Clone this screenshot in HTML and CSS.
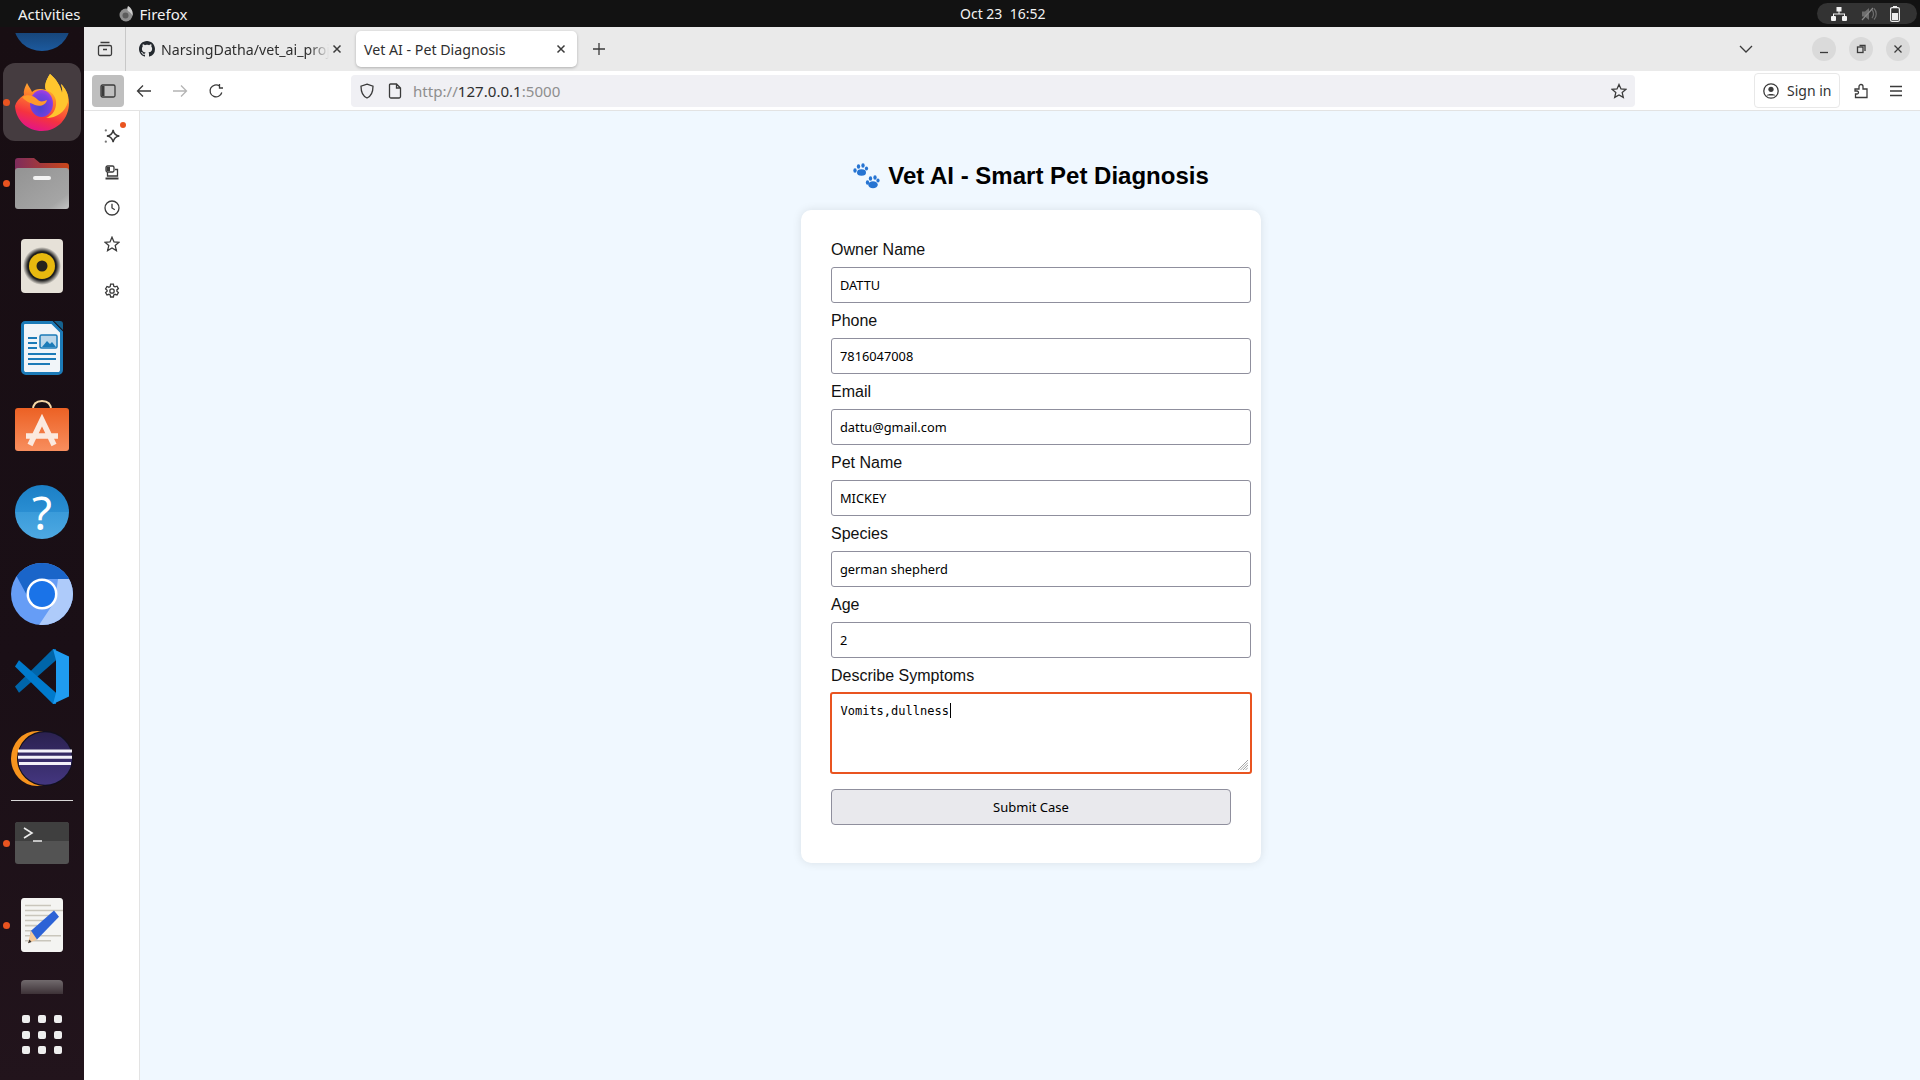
FILE: index.html
```html
<!DOCTYPE html>
<html lang="en">
<head>
    <meta charset="UTF-8">
    <title>Vet AI - Pet Diagnosis</title>
    <link rel="stylesheet" href="styles.css">
</head>
<body>
    <!-- gnome top bar -->
    <header class="topbar">
        <div class="topbar-left">
            <span class="activities">Activities</span>
            <span class="app-menu">
                <svg class="app-menu-icon" width="16" height="18" viewBox="0 0 16 18"><circle cx="8" cy="10" r="6.5" fill="#8f8f8f"/><path d="M10 1c-1 2-1 3.5 0 5 2 1 4 3 4.5 5 1-4-1-8-4.5-10z" fill="#cfcfcf"/><circle cx="7.5" cy="10.5" r="3" fill="#5d5d5d"/></svg>
                Firefox
            </span>
        </div>
        <div class="clock">Oct 23&nbsp;&nbsp;16:52</div>
        <div class="tray">
            <svg width="16" height="14" viewBox="0 0 16 14" fill="#f2f2f2"><rect x="5.5" y="0" width="5" height="4.5"/><rect x="0" y="9" width="5" height="5" rx="1"/><rect x="11" y="9" width="5" height="5" rx="1"/><path d="M7.5 4h1v2.5h5.5v3h-1V7.5H3v2H2v-3h5.5z"/></svg>
            <svg width="16" height="14" viewBox="0 0 16 14"><path d="M1 4.5h3L8 1v12L4 9.5H1z" fill="#6e6e6e"/><path d="M11 3c2 2 2 6 0 8M13 1.5c3 3 3 8 0 11" fill="none" stroke="#6e6e6e" stroke-width="1.2"/><path d="M1 13L12 1" stroke="#8a8a8a" stroke-width="1.2"/></svg>
            <svg width="10" height="16" viewBox="0 0 10 16"><rect x="3" y="0" width="4" height="2" fill="#eee"/><rect x="0.6" y="1.6" width="8.8" height="13.8" rx="1.5" fill="none" stroke="#eee" stroke-width="1.2"/><rect x="2" y="7" width="6" height="7" fill="#eee"/></svg>
        </div>
    </header>

    <div class="desktop">
        <!-- ubuntu dock -->
        <nav class="dock">
            <div class="dock-item planet">
                <svg width="58" height="18" viewBox="0 0 58 18"><defs><linearGradient id="pl" x1="0" y1="0" x2="0" y2="1"><stop offset="0" stop-color="#0e1f38"/><stop offset="1" stop-color="#1c5a9e"/></linearGradient></defs><ellipse cx="29" cy="-8" rx="28" ry="26" fill="url(#pl)"/></svg>
            </div>
            <div class="dock-item firefox-tile">
                <span class="run-dot"></span>
                <svg width="54" height="57" viewBox="0 0 54 57">
                    <defs>
                        <linearGradient id="ff" x1="0.7" y1="0" x2="0.4" y2="1"><stop offset="0" stop-color="#ffe847"/><stop offset="0.4" stop-color="#ff8a2a"/><stop offset="0.75" stop-color="#f5333f"/><stop offset="1" stop-color="#e31587"/></linearGradient>
                        <radialGradient id="ffglobe" cx="0.45" cy="0.65" r="0.7"><stop offset="0" stop-color="#4a45d0"/><stop offset="0.7" stop-color="#7a3fe0"/><stop offset="1" stop-color="#b040e0"/></radialGradient>
                    </defs>
                    <path d="M35 0C31 6 29 12 31 16 25 14 20 15 17 18 16 15 14 13 12 9 10 13 8 17 9 21 4 24 1 28 0 32 1 47 13 57 27 57 43 57 54 44 54 29 54 20 50 14 46 10 47 14 48 17 47 19 45 11 41 5 35 0Z" fill="url(#ff)"/>
                    <path d="M35 0C31 6 29 12 31 16 38 18 42 24 41 31 40 38 36 42 31 44 42 44 50 38 53 28 54 20 50 14 46 10 47 14 48 17 47 19 45 11 41 5 35 0Z" fill="#ffc62e"/>
                    <ellipse cx="26.5" cy="29.5" rx="11.5" ry="13.5" fill="url(#ffglobe)"/>
                    <path d="M7 23C12 20 18 21 22 25 24 28 28 28 32 26 31 31 25 33 20 31 16 29 11 28 7 23Z" fill="#ff9a2a"/>
                </svg>
            </div>
            <div class="dock-item files">
                <span class="run-dot"></span>
                <svg width="54" height="51" viewBox="0 0 54 51">
                    <defs>
                        <linearGradient id="fld" x1="0" y1="0" x2="1" y2="0"><stop offset="0" stop-color="#7e2c5c"/><stop offset="1" stop-color="#c9471a"/></linearGradient>
                        <linearGradient id="fldf" x1="0" y1="0" x2="1" y2="1"><stop offset="0" stop-color="#939393"/><stop offset="0.8" stop-color="#a5a5a5"/><stop offset="1" stop-color="#c4c4c4"/></linearGradient>
                    </defs>
                    <path d="M0 14V3a3 3 0 0 1 3-3h16l6 5h26a3 3 0 0 1 3 3v6z" fill="url(#fld)"/>
                    <rect x="0" y="10" width="54" height="41" rx="3" fill="url(#fldf)"/>
                    <rect x="18" y="18" width="18" height="4" rx="2" fill="#f3f3f3"/>
                </svg>
            </div>
            <div class="dock-item rhythmbox">
                <svg width="42" height="54" viewBox="0 0 42 54">
                    <defs><radialGradient id="spk"><stop offset="0.75" stop-color="#1e1e1e"/><stop offset="1" stop-color="#1e1e1e" stop-opacity="0"/></radialGradient></defs>
                    <rect width="42" height="54" rx="4" fill="#e6e1d8"/>
                    <circle cx="21" cy="27" r="19" fill="url(#spk)"/>
                    <circle cx="21" cy="27" r="13" fill="#e8b90f"/>
                    <circle cx="21" cy="27" r="5.5" fill="#26231c"/>
                </svg>
            </div>
            <div class="dock-item writer">
                <svg width="42" height="54" viewBox="0 0 42 54">
                    <path d="M4 1.5h27L40.5 11v38a3.5 3.5 0 0 1-3.5 3.5H5A3.5 3.5 0 0 1 1.5 49V4A2.5 2.5 0 0 1 4 1.5z" fill="#f1f5f9" stroke="#1c7bb8" stroke-width="3"/>
                    <path d="M33 0h6a3 3 0 0 1 3 3v6z" fill="#15628f"/>
                    <path d="M7 17h9M7 22h9M7 27h9M7 33h28M7 38h28M7 43h22" stroke="#1c7bb8" stroke-width="2"/>
                    <rect x="19" y="14" width="17" height="13" rx="1.5" fill="#bcd7ea" stroke="#1c7bb8" stroke-width="1.5"/>
                    <path d="M21 26l5-6 3 3 2-2 4 5z" fill="#1c7bb8"/>
                </svg>
            </div>
            <div class="dock-item appstore">
                <svg width="54" height="51" viewBox="0 0 54 51">
                    <defs><linearGradient id="bag" x1="0" y1="0" x2="0" y2="1"><stop offset="0" stop-color="#ec6124"/><stop offset="1" stop-color="#f88e5e"/></linearGradient></defs>
                    <path d="M18 10C18 3 22 1 27 1s9 2 9 9" fill="none" stroke="#f5d7a6" stroke-width="2"/>
                    <rect y="8" width="54" height="43" rx="3" fill="url(#bag)"/>
                    <path d="M15 45L27 20l12 25M11 36h32" fill="none" stroke="#fbe9df" stroke-width="5.5"/>
                </svg>
            </div>
            <div class="dock-item help">
                <svg width="54" height="54" viewBox="0 0 54 54">
                    <defs><linearGradient id="hlp" x1="0" y1="0" x2="0" y2="1"><stop offset="0" stop-color="#1b7fc6"/><stop offset="0.5" stop-color="#2a8ed2"/><stop offset="0.5" stop-color="#3a9bda"/><stop offset="1" stop-color="#4ea9e2"/></linearGradient></defs>
                    <circle cx="27" cy="27" r="27" fill="url(#hlp)"/>
                    <text x="27" y="45" text-anchor="middle" class="help-mark">?</text>
                </svg>
            </div>
            <div class="dock-item chrome">
                <svg width="62" height="62" viewBox="0 0 62 62">
                    <defs><clipPath id="chr"><circle cx="31" cy="31" r="31"/></clipPath></defs>
                    <g clip-path="url(#chr)">
                        <rect width="62" height="62" fill="#669df6"/>
                        <polygon points="0,0 62,0 62,16 31,16 19,38 5,12" fill="#1a65c9"/>
                        <polygon points="47,16 62,16 62,62 28,62 44,38" fill="#aecbfa"/>
                    </g>
                    <circle cx="31" cy="31" r="15.5" fill="#fff"/>
                    <circle cx="31" cy="31" r="13" fill="#1a73e8"/>
                </svg>
            </div>
            <div class="dock-item vscode">
                <svg width="54" height="55" viewBox="0 0 54 44" preserveAspectRatio="none">
                    <polygon points="0,30 4,35 41,9 41,0 38,0" fill="#0065a9"/>
                    <polygon points="0,14 4,9 41,35 41,44 38,44" fill="#007acc"/>
                    <polygon points="38,0 54,6 54,38 38,44 41,35 41,9" fill="#1f9cf0"/>
                </svg>
            </div>
            <div class="dock-item eclipse">
                <svg width="62" height="55" viewBox="0 0 62 44" preserveAspectRatio="none">
                    <defs><linearGradient id="ecl" x1="0" y1="0" x2="0" y2="1"><stop offset="0" stop-color="#2b2150"/><stop offset="1" stop-color="#43367f"/></linearGradient></defs>
                    <ellipse cx="26" cy="22" rx="26" ry="22" fill="#f7941e"/>
                    <ellipse cx="34" cy="22" rx="28" ry="22" fill="#12101f"/>
                    <ellipse cx="34" cy="22" rx="27" ry="21" fill="url(#ecl)"/>
                    <path d="M7 16h54M7 21h54M8 26h52" stroke="#f3f1f8" stroke-width="2.5"/>
                </svg>
            </div>
            <div class="dock-sep"></div>
            <div class="dock-item terminal">
                <span class="run-dot"></span>
                <svg width="54" height="42" viewBox="0 0 54 42">
                    <rect width="54" height="42" rx="3" fill="#535353"/>
                    <path d="M0 19V3a3 3 0 0 1 3-3h48a3 3 0 0 1 3 3v16z" fill="#3f3f3f"/>
                    <path d="M9 6l8 5-8 5M18 19h9" fill="none" stroke="#ececec" stroke-width="1.6"/>
                </svg>
            </div>
            <div class="dock-item editor">
                <span class="run-dot"></span>
                <svg width="42" height="54" viewBox="0 0 42 43" preserveAspectRatio="none">
                    <rect width="42" height="43" rx="3" fill="#f4f4f2"/>
                    <path d="M4 6h26M4 10h38M4 14h26M4 18h26M4 22h12M4 26h12M4 30h36M4 34h26" stroke="#c9c6bc" stroke-width="1.2"/>
                    <path d="M33 10l5 5-22 18-7-1 1-6z" fill="#2c62d6"/>
                    <path d="M10 26l6 7-9 3z" fill="#f4c99a"/>
                    <path d="M7 36l1.5-3 2 2z" fill="#333"/>
                </svg>
            </div>
            <div class="dock-item trash">
                <svg width="42" height="14" viewBox="0 0 42 14">
                    <defs><linearGradient id="trs" x1="0" y1="0" x2="0" y2="1"><stop offset="0" stop-color="#716a6d"/><stop offset="1" stop-color="#3d3237"/></linearGradient></defs>
                    <path d="M0 14V4a4 4 0 0 1 4-4h34a4 4 0 0 1 4 4v10z" fill="url(#trs)"/>
                </svg>
            </div>
            <div class="app-grid">
                <i></i><i></i><i></i><i></i><i></i><i></i><i></i><i></i><i></i>
            </div>
        </nav>

        <div class="browser">
            <!-- tab strip -->
            <div class="tabstrip">
                <div class="tab-manager">
                    <svg class="ico" width="16" height="16" viewBox="0 0 16 16"><path d="M3.5 1.5h9M1.5 6A1.5 1.5 0 0 1 3 4.5h10A1.5 1.5 0 0 1 14.5 6v7a1.5 1.5 0 0 1-1.5 1.5H3A1.5 1.5 0 0 1 1.5 13zM6 8.5h4"/></svg>
                </div>
                <div class="tab">
                    <svg class="tab-favicon" width="16" height="16" viewBox="0 0 16 16"><path fill="#24292f" d="M8 0C3.58 0 0 3.58 0 8c0 3.54 2.29 6.53 5.47 7.59.4.07.55-.17.55-.38 0-.19-.01-.82-.01-1.49-2.01.37-2.53-.49-2.69-.94-.09-.23-.48-.94-.82-1.13-.28-.15-.68-.52-.01-.53.63-.01 1.08.58 1.23.82.72 1.21 1.87.87 2.33.66.07-.52.28-.87.51-1.07-1.78-.2-3.64-.89-3.64-3.95 0-.87.31-1.59.82-2.15-.08-.2-.36-1.02.08-2.12 0 0 .67-.21 2.2.82.64-.18 1.32-.27 2-.27.68 0 1.36.09 2 .27 1.53-1.04 2.2-.82 2.2-.82.44 1.1.16 1.92.08 2.12.51.56.82 1.27.82 2.15 0 3.07-1.87 3.75-3.65 3.95.29.25.54.73.54 1.48 0 1.07-.01 1.93-.01 2.2 0 .21.15.46.55.38A8.013 8.013 0 0016 8c0-4.42-3.58-8-8-8z"/></svg>
                    <span class="tab-title">NarsingDatha/vet_ai_project</span>
                    <svg class="ico tab-close" width="10" height="10" viewBox="0 0 10 10"><path d="M1.5 1.5l7 7M8.5 1.5l-7 7"/></svg>
                </div>
                <div class="tab active">
                    <span class="tab-title">Vet AI - Pet Diagnosis</span>
                    <svg class="ico tab-close" width="10" height="10" viewBox="0 0 10 10"><path d="M1.5 1.5l7 7M8.5 1.5l-7 7"/></svg>
                </div>
                <svg class="ico new-tab" width="14" height="14" viewBox="0 0 14 14"><path d="M7 1v12M1 7h12"/></svg>
                <div class="tabstrip-right">
                    <svg class="ico" width="14" height="8" viewBox="0 0 14 8"><path d="M1 1l6 6 6-6"/></svg>
                    <div class="win-buttons">
                        <span class="win-btn"><svg class="ico" width="10" height="10" viewBox="0 0 10 10"><path d="M1 8.5h8"/></svg></span>
                        <span class="win-btn"><svg class="ico" width="10" height="10" viewBox="0 0 10 10"><rect x="1.5" y="3" width="5.5" height="5.5"/><path d="M3.5 1.5H9V7"/></svg></span>
                        <span class="win-btn"><svg class="ico" width="10" height="10" viewBox="0 0 10 10"><path d="M1.5 1.5l7 7M8.5 1.5l-7 7"/></svg></span>
                    </div>
                </div>
            </div>

            <!-- toolbar -->
            <div class="toolbar">
                <span class="sidebar-toggle"><svg class="ico toggle-ico" width="16" height="14" viewBox="0 0 16 14"><rect x="1" y="1" width="14" height="12" rx="1.5"/><path d="M3 2v10" stroke-width="3"/></svg></span>
                <span class="nav-btn back"><svg class="ico" width="16" height="14" viewBox="0 0 16 14"><path d="M15 7H1.5M7 1.5L1.5 7 7 12.5"/></svg></span>
                <span class="nav-btn off"><svg class="ico" width="16" height="14" viewBox="0 0 16 14"><path d="M1 7h13.5M9 1.5L14.5 7 9 12.5"/></svg></span>
                <span class="nav-btn"><svg class="ico" width="16" height="16" viewBox="0 0 16 16"><path d="M13.8 9.5A6 6 0 1 1 11.5 3M11.5 1v4H15"/></svg></span>
                <div class="urlbar">
                    <svg class="ico shield" width="16" height="16" viewBox="0 0 16 16"><path d="M8 1.2l6 2c0 6-1.5 9.8-6 11.800-4.500-2-6-5.800-6-11.800z"/></svg>
                    <svg class="ico page" width="14" height="16" viewBox="0 0 14 16"><path d="M2.5 1h6l4 4v8.500a1.500 1.500 0 0 1-1.500 1.500H3a1.500 1.500 0 0 1-1.500-1.500V2a1 1 0 0 1 1-1zM8.500 1v4h4"/></svg>
                    <span class="url"><span class="dim">http://</span>127.0.0.1<span class="dim">:5000</span></span>
                    <svg class="ico url-star" width="16" height="16" viewBox="0 0 16 16"><polygon points="8,1.5 10,6 14.8,6.4 11.2,9.6 12.3,14.4 8,11.9 3.7,14.4 4.8,9.6 1.2,6.4 6,6"/></svg>
                </div>
                <div class="signin">
                    <svg class="ico" width="16" height="16" viewBox="0 0 16 16"><circle cx="8" cy="8" r="7.2"/><circle cx="8" cy="6.3" r="2.6" class="fill"/><path d="M3.5 12.5c1-2 8-2 9 0" class="fill"/></svg>
                    <span>Sign in</span>
                </div>
                <svg class="ico puzzle" width="16" height="16" viewBox="0 0 16 16"><path d="M2 6h4V3.5a2 2 0 0 1 4 0V6h4v8.5H2.5V11H4a1.5 1.5 0 0 0 0-3H2z"/></svg>
                <svg class="ico burger" width="14" height="12" viewBox="0 0 14 12"><path d="M1 1.5h12M1 6h12M1 10.5h12"/></svg>
            </div>

            <div class="browser-main">
                <!-- firefox sidebar -->
                <aside class="sidebar">
                    <span class="side-ico genai">
                        <svg class="ico" width="18" height="18" viewBox="0 0 16 16"><path d="M9 2.5c.5 3.5 2 5 5.5 5.5-3.5.5-5 2-5.500 5.500C8.500 10 7 8.500 3.500 8 7 7.500 8.500 6 9 2.500z"/><circle cx="2.5" cy="3" r="1" class="fill dim"/><circle cx="2.5" cy="13" r="1" class="fill dim"/></svg>
                        <span class="side-dot"></span>
                    </span>
                    <span class="side-ico sync"><svg class="ico" width="16" height="16" viewBox="0 0 16 16"><rect x="2" y="1" width="8" height="6" rx="1.5"/><rect x="2.5" y="2" width="3.5" height="4" class="fill"/><path d="M3.5 7v4h10V4.5H11"/><path d="M1.5 13.5h13" stroke-width="2"/></svg></span>
                    <span class="side-ico"><svg class="ico" width="16" height="16" viewBox="0 0 16 16"><circle cx="8" cy="8" r="7"/><path d="M8 3.8V8l2.8 1.8"/></svg></span>
                    <span class="side-ico"><svg class="ico" width="16" height="16" viewBox="0 0 16 16"><polygon points="8,1.2 10,5.9 15,6.3 11.2,9.6 12.4,14.6 8,12 3.6,14.6 4.8,9.6 1,6.3 6,5.9"/></svg></span>
                    <span class="side-ico gear"><svg class="ico" width="16" height="16" viewBox="0 0 16 16"><path d="M6.6 1.2h2.8l.4 2 1.3.7 1.9-.7 1.4 2.4-1.5 1.3v1.4l1.5 1.3-1.4 2.4-1.9-.7-1.3.7-.4 2H6.6l-.4-2-1.3-.7-1.9.7-1.4-2.4 1.5-1.3V7.2L1.6 5.9 3 3.5l1.9.7 1.3-.7z"/><circle cx="8" cy="8" r="2.2"/></svg></span>
                </aside>

                <!-- the page itself -->
                <main class="page-content">
                    <h1 class="page-title">
                        <svg class="paws" width="27" height="26" viewBox="0 0 27 26">
                            <g fill="#2674d2">
                                <ellipse cx="2" cy="7.5" rx="1.7" ry="2.2"/>
                                <ellipse cx="5.5" cy="3.5" rx="1.7" ry="2.3"/>
                                <ellipse cx="10" cy="2.5" rx="1.7" ry="2.3"/>
                                <ellipse cx="13.5" cy="5.5" rx="1.6" ry="2.1"/>
                                <ellipse cx="8.5" cy="9.5" rx="4.5" ry="3.3"/>
                                <ellipse cx="14.5" cy="19.5" rx="1.7" ry="2.2"/>
                                <ellipse cx="17.5" cy="15.5" rx="1.7" ry="2.3"/>
                                <ellipse cx="22" cy="14.5" rx="1.7" ry="2.3"/>
                                <ellipse cx="25" cy="17.5" rx="1.6" ry="2.1"/>
                                <ellipse cx="20" cy="21.7" rx="4.8" ry="3.5"/>
                            </g>
                        </svg>
                        Vet AI - Smart Pet Diagnosis
                    </h1>
                    <form class="case-form">
                        <label for="owner">Owner Name</label>
                        <input type="text" id="owner" value="DATTU">
                        <label for="phone">Phone</label>
                        <input type="text" id="phone" value="7816047008">
                        <label for="email">Email</label>
                        <input type="text" id="email" value="dattu@gmail.com">
                        <label for="pet">Pet Name</label>
                        <input type="text" id="pet" value="MICKEY">
                        <label for="species">Species</label>
                        <input type="text" id="species" value="german shepherd">
                        <label for="age">Age</label>
                        <input type="text" id="age" value="2">
                        <label for="symptoms">Describe Symptoms</label>
                        <div class="symptoms-wrap">
                            <textarea id="symptoms">Vomits,dullness</textarea>
                            <span class="caret"></span>
                            <svg class="grip" width="10" height="10" viewBox="0 0 10 10"><path d="M0 10L10 0M2.5 10L10 2.5M5 10l5-5M7.5 10L10 7.5" stroke="#8a8a8a" stroke-width="0.8"/></svg>
                        </div>
                        <button type="button">Submit Case</button>
                    </form>
                </main>
            </div>
        </div>
    </div>
</body>
</html>
```

FILE: styles.css
```css
* {
    box-sizing: border-box;
}
body {
    margin: 0;
    height: 1080px;
    overflow: hidden;
    display: flex;
    flex-direction: column;
    font-family: "Noto Sans", sans-serif;
    background: #1a0f14;
}

/* top bar */
.topbar {
    height: 27px;
    flex: none;
    background: #121212;
    color: #f2f2f2;
    font-size: 15px;
    display: flex;
    align-items: center;
    position: relative;
}
.topbar-left {
    display: flex;
    align-items: center;
    padding-left: 18px;
    gap: 37px;
}
.app-menu {
    display: flex;
    align-items: center;
    gap: 6px;
}
.clock {
    position: absolute;
    left: 960px;
    top: 4px;
    font-size: 14px;
}
.tray {
    margin-left: auto;
    margin-right: 3px;
    width: 100px;
    height: 21px;
    background: #333;
    border-radius: 11px;
    display: flex;
    align-items: center;
    justify-content: space-between;
    padding: 0 17px 0 14px;
}

/* dock */
.desktop {
    flex: 1;
    display: flex;
    min-height: 0;
}
.dock {
    width: 84px;
    flex: none;
    display: flex;
    flex-direction: column;
    align-items: center;
    background: linear-gradient(#180e13, #1a0f16 60%, #22141c);
}
.dock-item {
    width: 84px;
    display: flex;
    justify-content: center;
    position: relative;
}
.dock-item svg {
    display: block;
    overflow: visible;
}
.planet { margin-top: 6px; }
.planet svg { overflow: hidden; }
.firefox-tile {
    margin-top: 12px;
    width: 78px;
    height: 78px;
    align-items: center;
    background: #453c40;
    border-radius: 12px;
}
.firefox-tile .run-dot { left: 0; }
.files { margin-top: 17px; }
.rhythmbox { margin-top: 30px; }
.writer { margin-top: 28px; }
.appstore { margin-top: 25px; }
.help { margin-top: 34px; }
.chrome { margin-top: 24px; }
.vscode { margin-top: 24px; }
.eclipse { margin-top: 27px; }
.dock-sep {
    width: 62px;
    height: 1px;
    background: #d8d6d7;
    margin-top: 14px;
}
.terminal { margin-top: 21px; }
.editor { margin-top: 34px; }
.trash { margin-top: 28px; }
.run-dot {
    position: absolute;
    left: 3px;
    top: 50%;
    width: 7px;
    height: 7px;
    margin-top: -3.5px;
    border-radius: 50%;
    background: #e95420;
}
.help-mark {
    font-family: "Noto Sans", sans-serif;
    font-size: 46px;
    fill: #fff;
}
.app-grid {
    margin-top: 21px;
    display: grid;
    grid-template-columns: repeat(3, 8px);
    grid-auto-rows: 8px;
    gap: 7.5px 8px;
}
.app-grid i {
    background: #eee;
    border-radius: 2px;
}

/* browser chrome */
.browser {
    flex: 1;
    min-width: 0;
    display: flex;
    flex-direction: column;
    background: #fff;
}
.ico {
    fill: none;
    stroke: #3b3b3b;
    stroke-width: 1.3;
    display: block;
}
.ico .fill {
    fill: #3b3b3b;
    stroke: none;
}
.ico .fill.dim {
    fill: #777;
}
.tabstrip {
    height: 44px;
    flex: none;
    background: #eaeaea;
    display: flex;
    align-items: center;
    font-size: 14.2px;
    color: #2f2f2f;
}
.tab-manager {
    width: 42px;
    height: 44px;
    border-right: 1px solid #c8c8c8;
    display: flex;
    align-items: center;
    justify-content: center;
}
.tab {
    height: 36px;
    display: flex;
    align-items: center;
    position: relative;
}
.tab:not(.active) {
    width: 230px;
    padding-left: 13px;
}
.tab-favicon {
    flex: none;
    margin-right: 6px;
}
.tab:not(.active) .tab-title {
    width: 168px;
    overflow: hidden;
    white-space: nowrap;
    -webkit-mask-image: linear-gradient(to right, #000 88%, transparent);
    mask-image: linear-gradient(to right, #000 88%, transparent);
}
.tab-close {
    position: absolute;
    top: 13px;
    stroke-width: 1.5;
}
.tab:not(.active) .tab-close {
    right: 14px;
}
.tab.active {
    width: 221px;
    padding-left: 8px;
    background: #fff;
    border-radius: 5px;
    box-shadow: 0 1px 3px rgba(0, 0, 0, 0.25);
}
.tab.active .tab-close {
    right: 11px;
}
.new-tab {
    margin-left: 15px;
}
.tabstrip-right {
    margin-left: auto;
    display: flex;
    align-items: center;
}
.win-buttons {
    display: flex;
    gap: 13px;
    margin-left: 59px;
    margin-right: 10px;
}
.win-btn {
    width: 24px;
    height: 24px;
    border-radius: 50%;
    background: #dadada;
    display: flex;
    align-items: center;
    justify-content: center;
}
.toolbar {
    height: 40px;
    flex: none;
    background: #fff;
    border-bottom: 1px solid #e3e3e3;
    display: flex;
    align-items: center;
    padding-left: 8px;
}
.sidebar-toggle {
    width: 32px;
    height: 32px;
    background: #bfbfbf;
    border-radius: 4px;
    display: flex;
    align-items: center;
    justify-content: center;
}
.nav-btn {
    width: 36px;
    display: flex;
    justify-content: center;
}
.nav-btn.back {
    margin-left: 2px;
}
.nav-btn.off .ico {
    stroke: #b4b4b4;
}
.urlbar {
    margin-left: 117px;
    width: 1284px;
    height: 32px;
    background: #f0f0f4;
    border-radius: 4px;
    display: flex;
    align-items: center;
    padding-left: 8px;
    font-size: 15.1px;
}
.page {
    margin-left: 13px;
}
.url {
    margin-left: 11px;
    color: #2f2f2f;
}
.url .dim {
    color: #8e8e8e;
}
.url-star {
    margin-left: auto;
    margin-right: 8px;
}
.signin {
    margin-left: 119px;
    width: 86px;
    height: 35px;
    border: 1px solid #e8e8e8;
    border-radius: 4px;
    display: flex;
    align-items: center;
    gap: 8px;
    padding-left: 8px;
    font-size: 14px;
    color: #333;
}
.puzzle {
    margin-left: 13px;
}
.burger {
    margin-left: 20px;
}
.browser-main {
    flex: 1;
    display: flex;
    min-height: 0;
}
.sidebar {
    width: 56px;
    flex: none;
    background: #fff;
    border-right: 1px solid #e3e3e3;
    display: flex;
    flex-direction: column;
    align-items: center;
    padding-top: 16px;
}
.side-ico {
    display: block;
    position: relative;
    margin-bottom: 20px;
}
.side-ico.sync {
    margin-bottom: 19px;
}
.side-ico.gear {
    margin-top: 11px;
}
.side-dot {
    position: absolute;
    right: -5px;
    top: -5px;
    width: 6px;
    height: 6px;
    border-radius: 50%;
    background: #e95420;
}

/* page */
.page-content {
    flex: 1;
    background: #f0f8ff;
    padding-top: 51px;
    padding-left: 2px;
    font-family: "Liberation Sans", Arial, sans-serif;
    color: #111;
}
.page-title {
    margin: 0 0 21px;
    font-size: 24px;
    line-height: 27px;
    color: #000;
    display: flex;
    justify-content: center;
    align-items: center;
    gap: 8px;
}
.case-form {
    width: 460px;
    margin: 0 auto;
    padding: 30px;
    background: #fff;
    border-radius: 10px;
    box-shadow: 0 0 10px rgba(0, 0, 0, 0.1);
}
.case-form label {
    display: block;
    font-size: 16px;
    line-height: 20px;
    margin-bottom: 7px;
}
.case-form input {
    display: block;
    width: 420px;
    height: 36px;
    margin-bottom: 8px;
    padding: 0 8px;
    border: 1px solid #8f8f9d;
    border-radius: 3px;
    background: #fff;
    font-family: "Noto Sans", sans-serif;
    font-size: 12.8px;
    color: #000;
}
.symptoms-wrap {
    position: relative;
    width: 422px;
    height: 82px;
    margin: -1px 0 15px -1px;
}
.case-form textarea {
    display: block;
    width: 422px;
    height: 82px;
    padding: 10px 8.5px;
    border: 2px solid #e95420;
    border-radius: 3px;
    outline: none;
    resize: none;
    font-family: "DejaVu Sans Mono", monospace;
    font-size: 12px;
    line-height: 15px;
    color: #000;
}
.caret {
    position: absolute;
    left: 120px;
    top: 11px;
    width: 1px;
    height: 15px;
    background: #000;
}
.grip {
    position: absolute;
    right: 4px;
    bottom: 4px;
}
.case-form button {
    display: block;
    width: 400px;
    height: 36px;
    margin-bottom: 8px;
    background: #e9e9ed;
    border: 1px solid #8f8f9d;
    border-radius: 4px;
    font-family: "Noto Sans", sans-serif;
    font-size: 13px;
    color: #000;
}
```
